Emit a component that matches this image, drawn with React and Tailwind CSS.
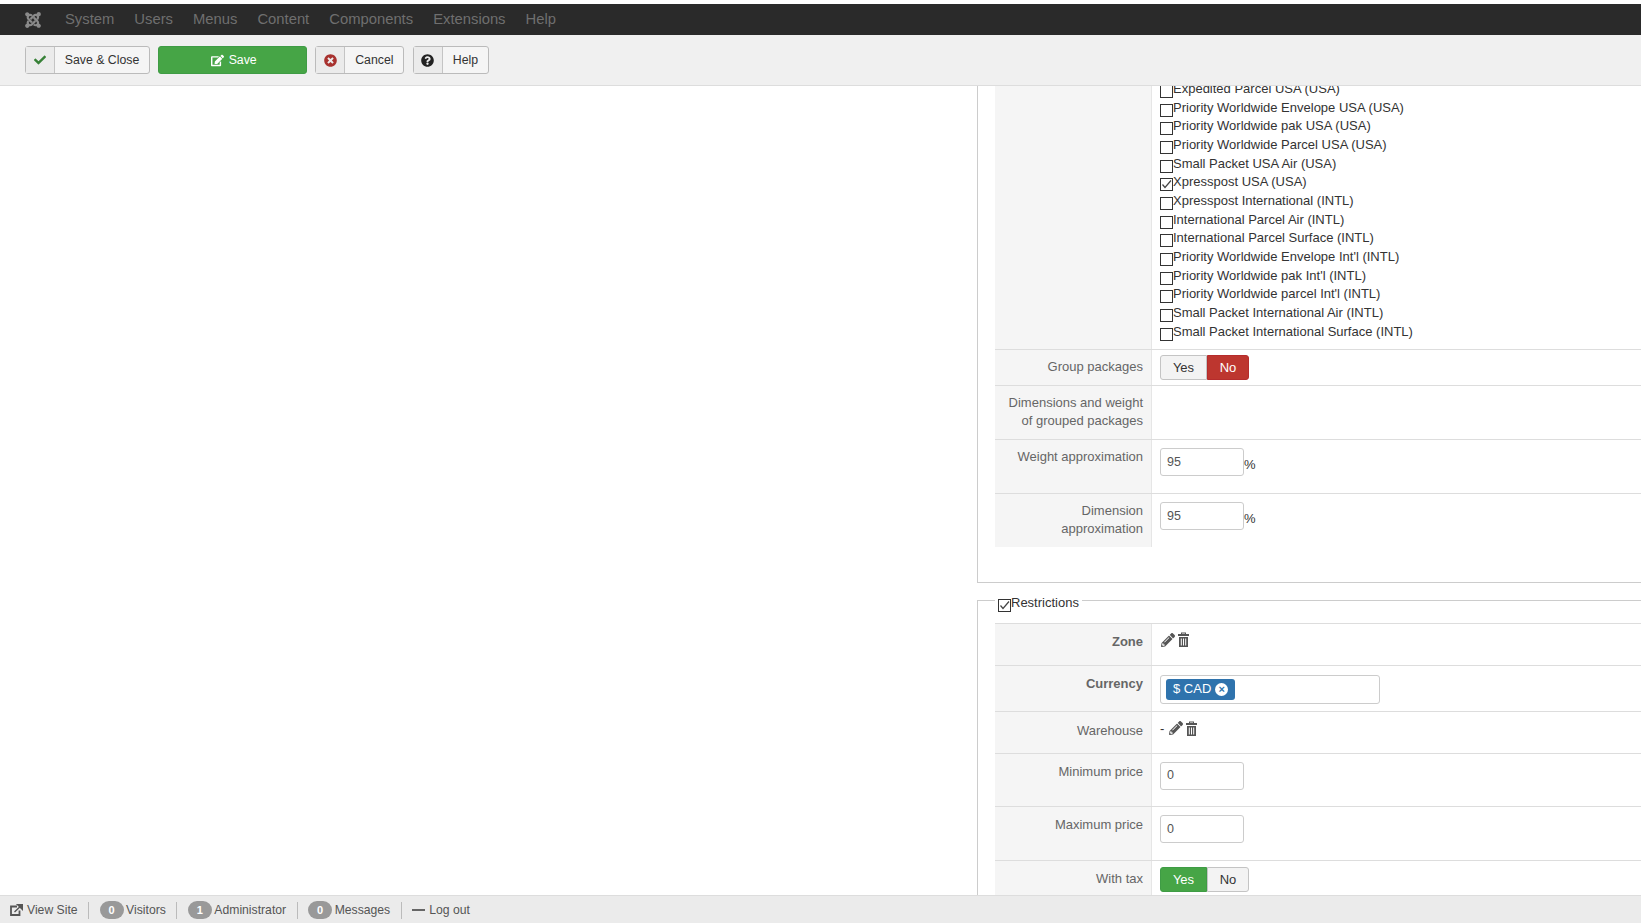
import React from "react";
import { FaJoomla, FaCheck, FaEdit, FaTimesCircle, FaQuestionCircle, FaPencilAlt } from "react-icons/fa";

const NAV = ["System", "Users", "Menus", "Content", "Components", "Extensions", "Help"];

const SERVICES = [
  ["Expedited Parcel USA (USA)"],
  ["Priority Worldwide Envelope USA (USA)"],
  ["Priority Worldwide pak USA (USA)"],
  ["Priority Worldwide Parcel USA (USA)"],
  ["Small Packet USA Air (USA)"],
  ["Xpresspost USA (USA)", true],
  ["Xpresspost International (INTL)"],
  ["International Parcel Air (INTL)"],
  ["International Parcel Surface (INTL)"],
  ["Priority Worldwide Envelope Int'l (INTL)"],
  ["Priority Worldwide pak Int'l (INTL)"],
  ["Priority Worldwide parcel Int'l (INTL)"],
  ["Small Packet International Air (INTL)"],
  ["Small Packet International Surface (INTL)"],
];

const ToolButton = ({ icon, label, className }) => (
  <button className={`flex h-[28px] items-stretch rounded-[3px] border border-[#bbbbbb] bg-[#f5f5f5] text-[12.3px] text-[#333333] ${className}`}>
    <span className="flex w-[29px] items-center justify-center border-r border-[#c4c4c4] bg-[#ebebeb]">{icon}</span>
    <span className="flex flex-1 items-center justify-center pt-px">{label}</span>
  </button>
);

const Check = ({ checked }) => (
  <span className="relative top-[5px] inline-block h-[13px] w-[13px] shrink-0 border border-[#333333] bg-white">
    {checked && (
      <svg viewBox="0 0 13 13" className="absolute -left-px -top-px h-[13px] w-[13px]">
        <path d="M2.5 6.5 L5 9.5 L11 2.5" fill="none" stroke="#444444" strokeWidth="1.2" />
      </svg>
    )}
  </span>
);

const Row = ({ label, bold, className, labelClass = "pt-[8px]", children }) => (
  <div className={`flex border-t border-[#dddddd] ${className}`}>
    <div className={`w-[157px] shrink-0 border-r border-[#e6e6e6] bg-[#f5f5f5] pl-2 pr-[8px] text-right text-[13px] leading-[18px] text-[#666666] ${labelClass} ${bold ? "font-bold" : ""}`}>
      {label}
    </div>
    <div className="flex-1 pl-[8px]">{children}</div>
  </div>
);

const TextBox = ({ value }) => (
  <span className="flex h-[28px] w-[84px] items-center rounded-[3px] border border-[#cccccc] bg-white pl-[6px] text-[12.5px] text-[#555555]">
    {value}
  </span>
);

const Toggle = ({ on, className }) => (
  <div className={`flex h-[25px] w-[89px] text-[13px] leading-[23px] ${className}`}>
    <span className={`w-[47px] rounded-l-[3px] border text-center ${on === "yes" ? "border-[#3f9c45] bg-[#46a546] text-white" : "border-[#c4c4c4] bg-[#f3f3f3] text-[#333333]"}`}>Yes</span>
    <span className={`w-[42px] rounded-r-[3px] border text-center ${on === "no" ? "border-[#b52c2c] bg-[#bd362f] text-white" : "border-[#c4c4c4] bg-[#f3f3f3] text-[#333333]"}`}>No</span>
  </div>
);

const TrashIcon = () => (
  <svg viewBox="0 0 11 15" className="h-[15px] w-[11px]" fill="#555555">
    <path d="M3 2.2V.6h5v1.6h-1V1.5H4v.7z" />
    <rect x="0" y="2" width="11" height="2" />
    <path d="M1 5h9v10H1zM2.8 6.5v7h1v-7zM5 6.5v7h1v-7zM7.2 6.5v7h1v-7z" fillRule="evenodd" />
  </svg>
);

const EditIcons = () => (
  <span className="inline-flex items-center gap-[3px] pl-px">
    <FaPencilAlt className="h-[14px] w-[14px] text-[#555555]" />
    <TrashIcon />
  </span>
);

const ViewSiteIcon = () => (
  <svg viewBox="0 0 13 12" className="mr-[4px] h-[12px] w-[13px]">
    <path d="M7 2.5H1v8.5h8.5V6.5" fill="none" stroke="#555555" strokeWidth="1.8" />
    <path d="M4.5 8 L10 2.8 M7.5 0.6h5v5z" fill="#555555" stroke="#555555" strokeWidth="1.4" />
  </svg>
);

const Badge = ({ n }) => (
  <span className="flex h-[18px] w-[24px] items-center justify-center rounded-full bg-[#999999] text-[11px] font-bold text-white">{n}</span>
);

const Sep = () => <span className="mx-[10.5px] h-[17px] w-px bg-[#bbbbbb]" />;

export default function App() {
  return (
    <div className="flex h-screen flex-col overflow-hidden bg-white pt-[4px] font-['Liberation_Sans',Arial,sans-serif]">
      <nav className="flex h-[31px] shrink-0 items-center bg-[#2a2a2a] pl-[24px] text-[14.8px] text-[#6f6f6f]">
        <FaJoomla className="mr-[23px] h-[18px] w-[18px] text-[#8a8a8a]" />
        <div className="flex gap-[20px]">
          {NAV.map((n) => (
            <span key={n}>{n}</span>
          ))}
        </div>
      </nav>

      <div className="flex h-[51px] shrink-0 items-center border-b border-[#dddddd] bg-[#f0f0f0] pl-[25px]">
        <ToolButton className="w-[125px]" label="Save & Close" icon={<FaCheck className="h-[12px] w-[12px] text-[#378137]" />} />
        <button className="ml-[8.4px] flex h-[28px] w-[148.6px] items-center justify-center gap-[5px] rounded-[3px] border border-[#3f9c45] bg-[#46a546] pl-[2px] pt-px text-[12.3px] text-white">
          <FaEdit className="h-[13px] w-[13px]" />
          Save
        </button>
        <ToolButton className="ml-[8.4px] w-[89px]" label="Cancel" icon={<FaTimesCircle className="h-[13px] w-[13px] text-[#a8322f]" />} />
        <ToolButton className="ml-[8.4px] w-[76.5px]" label="Help" icon={<FaQuestionCircle className="h-[13px] w-[13px] text-[#222222]" />} />
      </div>

      <main className="flex min-h-0 flex-1 overflow-hidden">
        <div className="w-[977px] shrink-0" />
        <div className="-mt-[20px] w-[800px] shrink-0">
          <fieldset className="border border-[#cccccc] px-[17px] pb-[35px]">
            <div className="flex">
              <div className="w-[157px] shrink-0 border-r border-[#e6e6e6] bg-[#f5f5f5]" />
              <ul className="pb-[7.5px] pl-[8px] pt-[13px] text-[13px] leading-[18.67px] text-[#333333]">
                {SERVICES.map(([name, checked]) => (
                  <li key={name} className="flex items-baseline">
                    <Check checked={checked} />
                    <span>{name}</span>
                  </li>
                ))}
              </ul>
            </div>
            <Row label="Group packages" className="h-[36.3px]">
              <Toggle on="no" className="mt-[5px]" />
            </Row>
            <Row label="Dimensions and weight of grouped packages" className="h-[53.7px]" />
            <Row label="Weight approximation" className="h-[54.3px]">
              <div className="flex items-start pt-[8px] text-[13px] text-[#333333]">
                <TextBox value="95" />
                <span className="mt-[7px]">%</span>
              </div>
            </Row>
            <Row label="Dimension approximation" className="h-[54px]">
              <div className="flex items-start pt-[8px] text-[13px] text-[#333333]">
                <TextBox value="95" />
                <span className="mt-[7px]">%</span>
              </div>
            </Row>
          </fieldset>

          <fieldset className="mt-[8px] border border-[#cccccc] px-[17px]">
            <legend className="pr-[3px] text-[13px] leading-[18.67px] text-[#333333]">
              <span className="relative top-[3px] flex items-baseline">
                <span className="ml-[3px]"><Check checked /></span>
                Restrictions
              </span>
            </legend>
            <div className="mt-[13.5px]">
              <Row label="Zone" bold className="h-[41.3px]" labelClass="pt-[8.5px]">
                <div className="pt-[5.5px]"><EditIcons /></div>
              </Row>
              <Row label="Currency" bold className="h-[46px]" labelClass="pt-[9px]">
                <div className="mt-[9px] flex h-[29px] w-[220px] items-center rounded-[3px] border border-[#cccccc] bg-white pl-[5px]">
                  <span className="flex h-[21px] w-[69px] items-center gap-[4px] rounded-[3px] bg-[#2f73ad] pl-[7px] text-[13px] text-white">
                    $ CAD
                    <span className="flex h-[13px] w-[13px] items-center justify-center rounded-full bg-white text-[11px] font-bold leading-none text-[#2f73ad]">×</span>
                  </span>
                </div>
              </Row>
              <Row label="Warehouse" className="h-[42.1px]" labelClass="pt-[10px]">
                <div className="flex items-center gap-[4px] pt-[7px] text-[13px] text-[#333333]">
                  <span>-</span>
                  <EditIcons />
                </div>
              </Row>
              <Row label="Minimum price" className="h-[53.6px]" labelClass="pt-[9px]">
                <div className="pt-[8px]"><TextBox value="0" /></div>
              </Row>
              <Row label="Maximum price" className="h-[54px]" labelClass="pt-[9px]">
                <div className="pt-[8px]"><TextBox value="0" /></div>
              </Row>
              <Row label="With tax" className="h-[54px]" labelClass="pt-[9px]">
                <Toggle on="yes" className="mt-[6px]" />
              </Row>
            </div>
          </fieldset>
        </div>
      </main>

      <footer className="flex h-[28px] shrink-0 items-center border-t border-[#dddddd] bg-[#ebebeb] pl-[10px] pt-px text-[12.2px] text-[#555555]">
        <ViewSiteIcon />
        View Site
        <Sep />
        <Badge n="0" />
        <span className="ml-[2.5px]">Visitors</span>
        <Sep />
        <Badge n="1" />
        <span className="ml-[2.5px]">Administrator</span>
        <Sep />
        <Badge n="0" />
        <span className="ml-[2.5px]">Messages</span>
        <Sep />
        <span className="mr-[4px] h-[2px] w-[13px] bg-[#666666]" />
        Log out
      </footer>
    </div>
  );
}
